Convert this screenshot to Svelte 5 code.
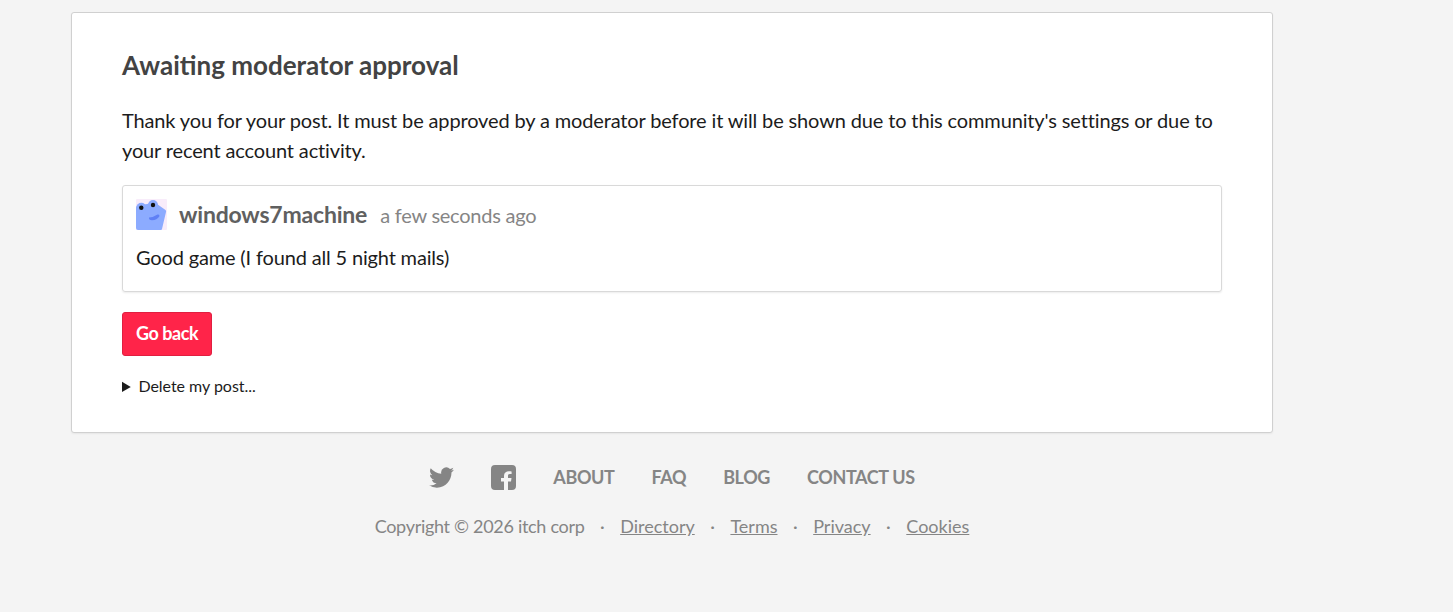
<script>
    const footerLinks = ["About", "FAQ", "Blog", "Contact us"];
    const legalLinks = ["Directory", "Terms", "Privacy", "Cookies"];
</script>

<div class="wrapper">
    <main class="card">
        <h2>Awaiting moderator approval</h2>
        <p class="message">Thank you for your post. It must be approved by a moderator before it will be shown due to this community's settings or due to your recent account activity.</p>

        <div class="post">
            <div class="post-header">
                <svg class="avatar" viewBox="0 0 31 31" aria-hidden="true">
                    <rect width="31" height="31" rx="1" fill="#f8ecfa" />
                    <path d="M1 7 L16 4 L21 5 L29.500 11 Q30.500 12 30 13 L26 30 Q25.800 31 25 31 L2 31 Q0 31 0 29 L0 9 Q0 7.500 1 7 Z" fill="#8cabff" />
                    <circle cx="5.300" cy="8.700" r="5" fill="#8cabff" />
                    <circle cx="17" cy="6" r="5" fill="#8cabff" />
                    <circle cx="5.300" cy="8.700" r="2.200" fill="#111" />
                    <circle cx="17" cy="6" r="2.200" fill="#111" />
                    <path d="M13 18.500 Q18 18 21.500 15.500 Q24 15 23.300 17.500 Q21 21 16 21.200 Q12.500 21 13 18.500 Z" fill="#5f80f5" />
                </svg>
                <a class="username" href="#user">windows7machine</a>
                <span class="time">a few seconds ago</span>
            </div>
            <p class="post-body">Good game (I found all 5 night mails)</p>
        </div>

        <a class="button" href="#back">Go back</a>

        <details>
            <summary>Delete my post...</summary>
        </details>
    </main>

    <footer>
        <div class="footer-nav">
            <svg class="icon twitter" viewBox="0 0 24 24" aria-hidden="true">
                <path d="M23.950 4.570a10 10 0 0 1-2.820.770 4.960 4.960 0 0 0 2.160-2.720 9.900 9.900 0 0 1-3.120 1.190 4.920 4.920 0 0 0-8.380 4.480A13.940 13.940 0 0 1 1.670 3.150a4.920 4.920 0 0 0 1.520 6.570 4.900 4.900 0 0 1-2.230-.62v.06a4.920 4.920 0 0 0 3.950 4.830 5 5 0 0 1-2.210.08 4.940 4.940 0 0 0 4.600 3.420A9.870 9.870 0 0 1 0 19.540a14 14 0 0 0 7.560 2.210c9.050 0 14-7.500 14-13.980 0-.21 0-.42-.02-.63a9.940 9.940 0 0 0 2.410-2.570z" />
            </svg>
            <svg class="icon facebook" viewBox="0 0 25 25" aria-hidden="true">
                <path fill-rule="evenodd" d="M4 0h17a4 4 0 0 1 4 4v17a4 4 0 0 1-4 4h-4v-8.500h3l.5-3.500h-3.500v-2c0-1.200.4-1.900 1.800-1.900h1.800V6.500c-.4 0-1.400-.2-2.600-.2-2.900 0-5 1.600-5 4.500V13H10v3.500h3V25H4a4 4 0 0 1-4-4V4a4 4 0 0 1 4-4z" />
            </svg>
            {#each footerLinks as link}
                <a href="#{link}">{link}</a>
            {/each}
        </div>
        <div class="copyright">
            <span class="owner">Copyright © 2026 itch corp</span>
            {#each legalLinks as link}
                <span class="dot">·</span>
                <a href="#{link}">{link}</a>
            {/each}
        </div>
    </footer>
</div>

<style>
    :global(body) {
        background: #f4f4f4;
        font-family: Lato, "Liberation Sans", sans-serif;
        color: #121212;
    }
    .wrapper {
        width: 1202px;
        margin-left: 71px;
        padding-top: 12px;
        padding-bottom: 64px;
    }
    .card {
        box-sizing: border-box;
        background: #fff;
        border: 1px solid #d0d0d0;
        border-radius: 3px;
        box-shadow: 0 1px 2px rgba(0, 0, 0, 0.06);
        padding: 35px 50px;
        height: 421px;
    }
    h2 {
        margin: 0 0 23px 0;
        font-size: 26px;
        line-height: 34px;
        font-weight: 700;
        color: #434343;
    }
    .message {
        margin: 0 0 20px 0;
        font-size: 20px;
        line-height: 30px;
        letter-spacing: -0.14px;
        color: #1c1c1c;
    }
    .post {
        border: 1px solid #d9d9d9;
        border-radius: 3px;
        box-shadow: 0 1px 2px rgba(0, 0, 0, 0.08);
        padding: 13px;
        height: 107px;
        box-sizing: border-box;
        margin-bottom: 20px;
    }
    .post-header {
        display: flex;
        align-items: center;
        height: 31px;
    }
    .avatar {
        width: 31px;
        height: 31px;
        margin-right: 12px;
        flex: none;
    }
    .username {
        font-size: 23px;
        font-weight: 700;
        color: #606060;
        text-decoration: none;
        margin-right: 13px;
        margin-top: -1px;
        letter-spacing: -0.2px;
    }
    .time {
        font-size: 20px;
        color: #858585;
        letter-spacing: -0.24px;
    }
    .post-body {
        margin: 12px 0 0 0;
        font-size: 20px;
        line-height: 30px;
        letter-spacing: -0.16px;
        color: #1c1c1c;
    }
    .button {
        display: block;
        width: fit-content;
        box-sizing: border-box;
        height: 44px;
        line-height: 40px;
        padding: 0 13px;
        background: #ff2449;
        border: 1px solid #e01f40;
        border-radius: 3px;
        color: #fff;
        font-size: 18px;
        font-weight: 700;
        text-decoration: none;
        margin-bottom: 20px;
        letter-spacing: -0.45px;
    }
    summary {
        font-size: 16px;
        line-height: 20px;
        cursor: pointer;
        letter-spacing: -0.03px;
        color: #1c1c1c;
    }
    summary::marker {
        font-size: 15.5px;
    }
    footer {
        margin-top: 30px;
        text-align: center;
        color: #858585;
    }
    .footer-nav {
        display: flex;
        justify-content: center;
        align-items: center;
        gap: 37px;
        height: 28px;
    }
    .footer-nav a {
        color: #858585;
        font-size: 18px;
        font-weight: 700;
        text-transform: uppercase;
        text-decoration: none;
        letter-spacing: -0.38px;
    }
    .icon {
        fill: #858585;
        flex: none;
    }
    .twitter {
        width: 25px;
        height: 25px;
    }
    .facebook {
        width: 25px;
        height: 25px;
    }
    .copyright {
        display: flex;
        justify-content: center;
        gap: 15.5px;
        margin-top: 22px;
        font-size: 18px;
        line-height: 26px;
    }
    .owner {
        letter-spacing: -0.3px;
    }
    .copyright a {
        color: #858585;
    }
</style>
